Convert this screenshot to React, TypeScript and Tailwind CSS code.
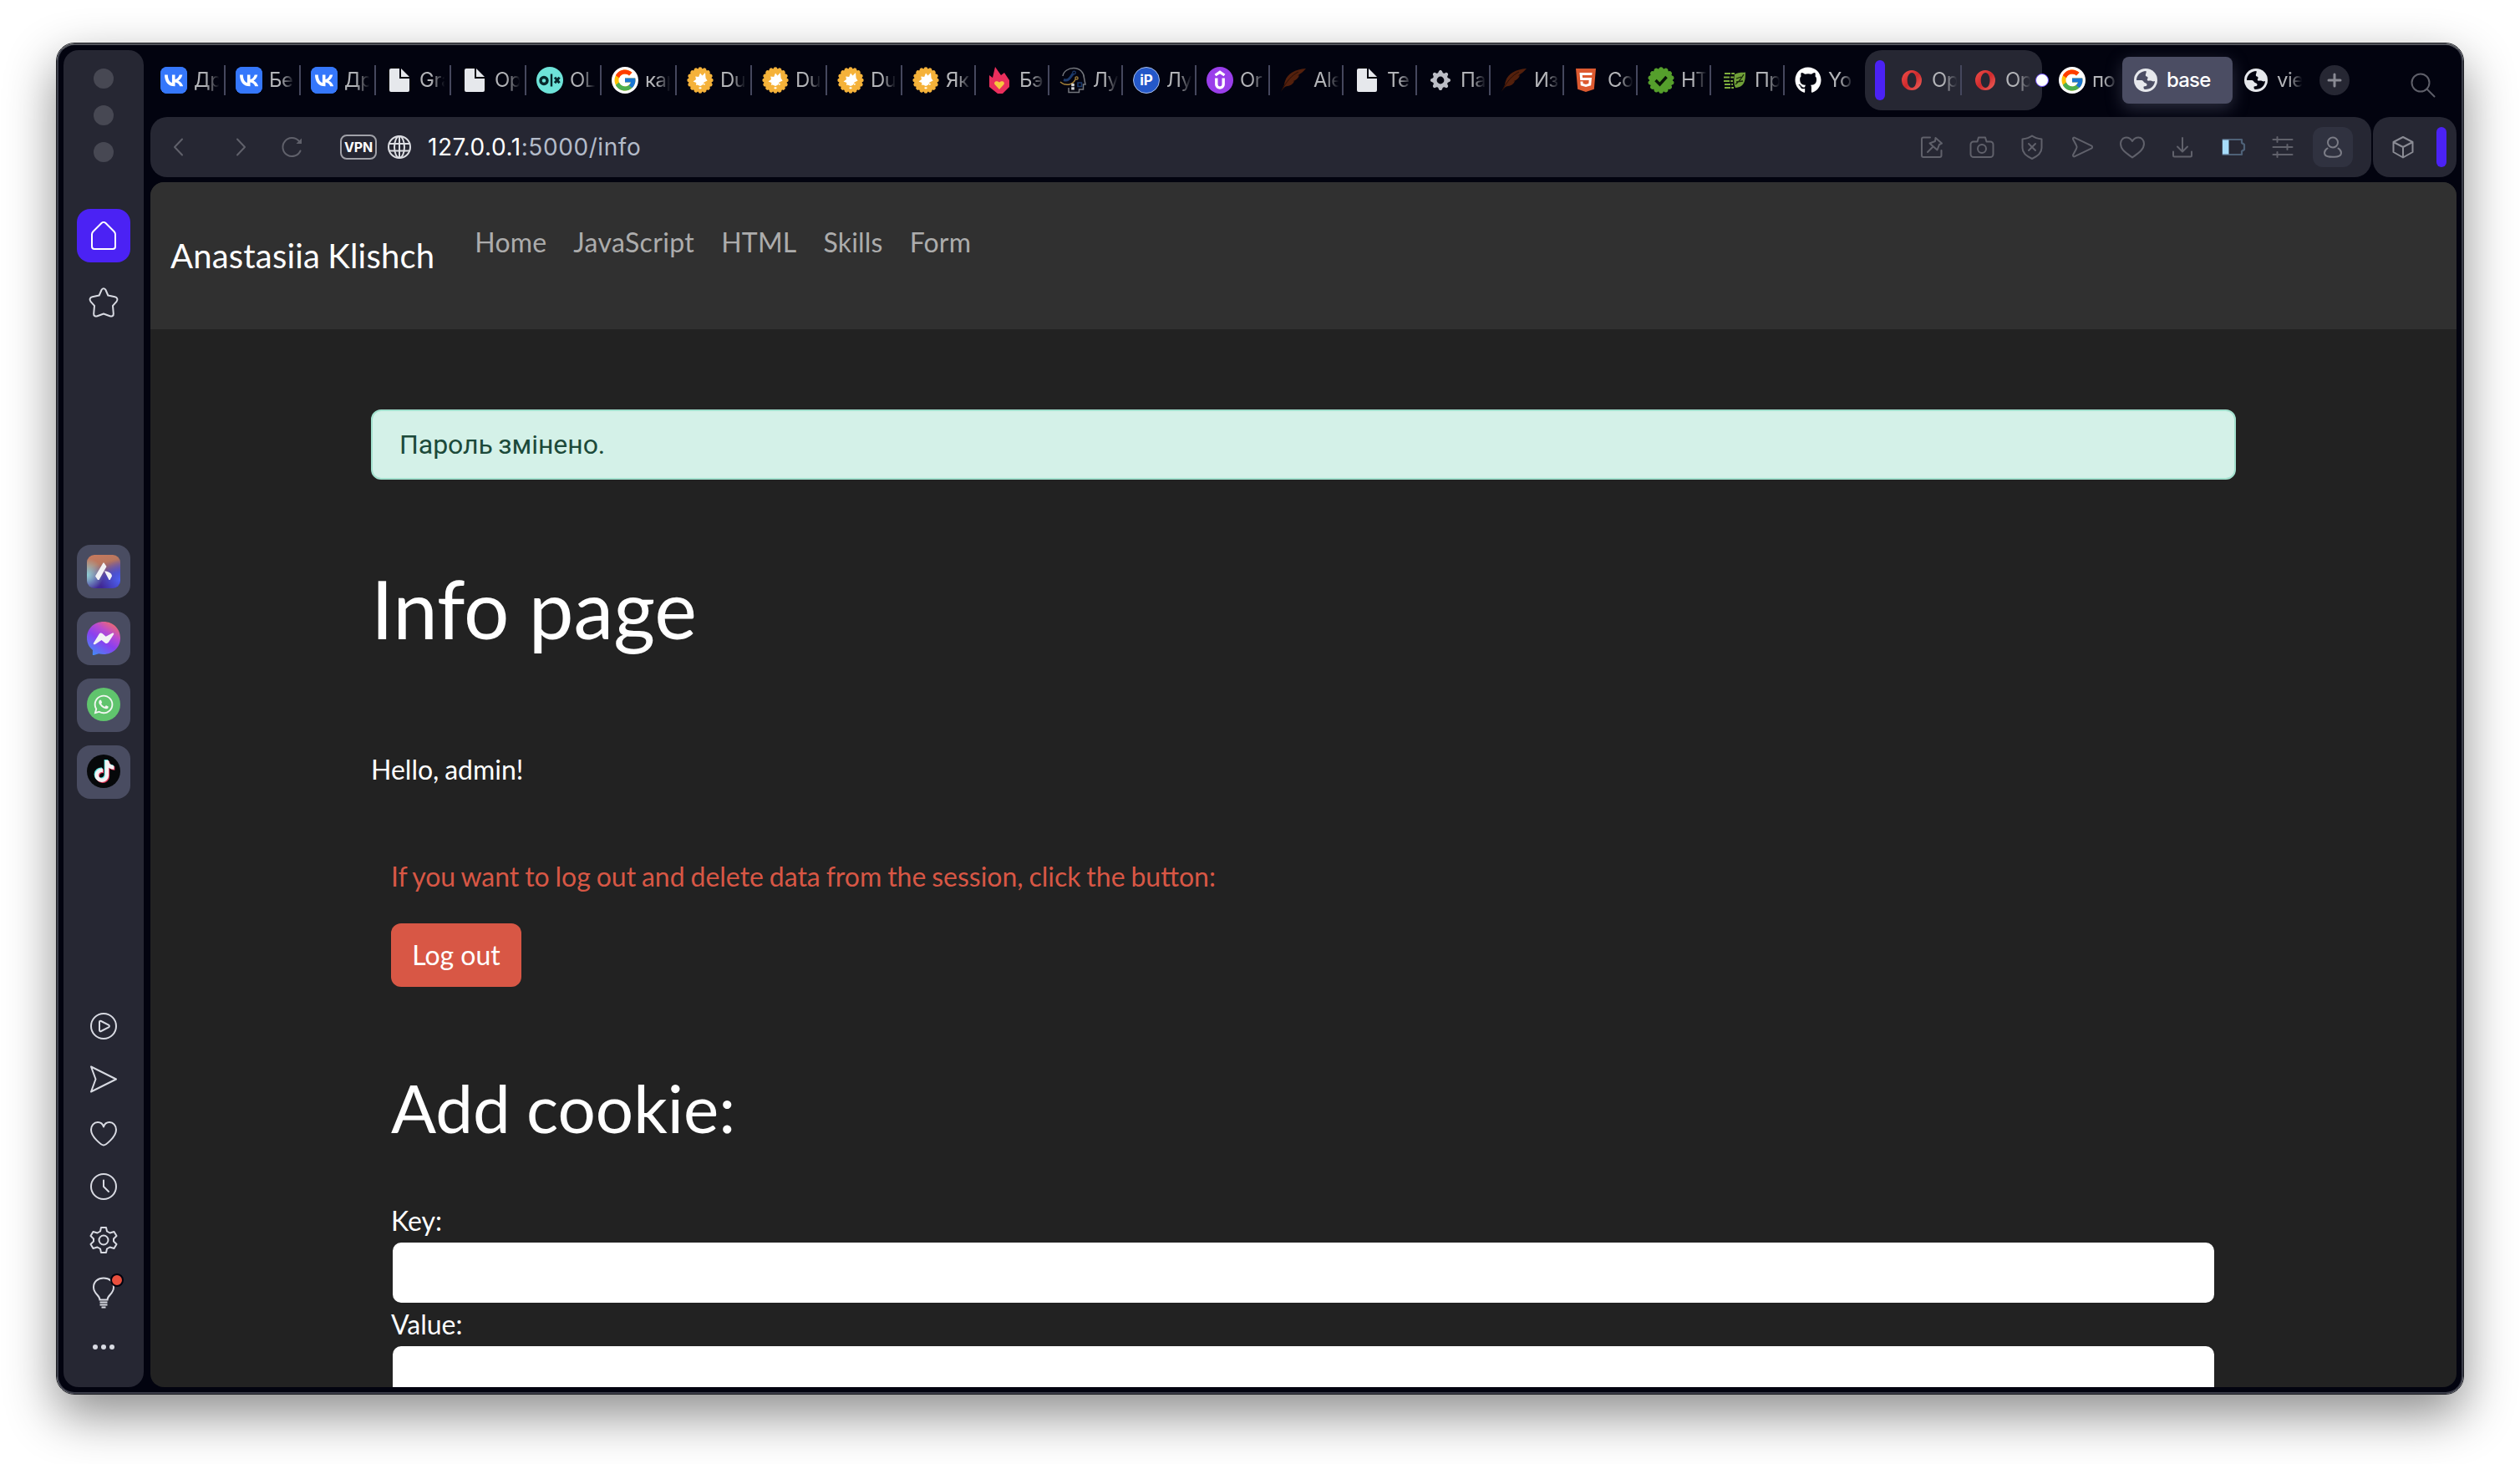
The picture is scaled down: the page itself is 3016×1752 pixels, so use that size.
import type { ReactNode } from "react";
import { FaVk, FaGithub, FaHtml5, FaWhatsapp, FaTiktok } from "react-icons/fa6";
import { FcGoogle } from "react-icons/fc";
import { BsGearFill } from "react-icons/bs";

const chromeFont = "font-['Inter','Noto_Sans',sans-serif]";

/* ---------- favicons ---------- */

const Vk = () => (
  <span className="flex size-8 items-center justify-center overflow-hidden rounded-lg bg-[#3577fb]">
    <span className="flex size-7 items-center justify-center bg-white text-[#3577fb]">
      <FaVk className="size-[38px] shrink-0" />
    </span>
  </span>
);

const Doc = () => (
  <svg viewBox="0 0 32 32" className="size-8">
    <path d="M6 2h10v12h12v14a2 2 0 0 1-2 2H6a2 2 0 0 1-2-2V4a2 2 0 0 1 2-2z" fill="#e6e8ec" />
    <path d="M18 2l10 10H18z" fill="#e6e8ec" />
  </svg>
);

const Olx = () => (
  <span className="flex size-8 items-center justify-center rounded-full bg-[#6ee3d9]">
    <svg viewBox="0 0 32 32" className="size-8" fill="none" stroke="#06262b">
      <circle cx="9" cy="16.500" r="4" strokeWidth="3.400" />
      <path d="M18 8.500v15" strokeWidth="2.400" />
      <path d="M22 12.600l5.600 6.600M27.600 12.600l-5.600 6.600" strokeWidth="3" />
    </svg>
  </span>
);

const Google = () => (
  <span className="flex size-8 items-center justify-center rounded-full bg-white">
    <FcGoogle className="size-[30px]" />
  </span>
);

const Duplicate = () => (
  <svg viewBox="0 0 32 32" className="size-8">
    <g fill="#f5b23a">
      <circle cx="16" cy="16" r="14" />
      {[0, 1, 2, 3, 4, 5, 6, 7, 8, 9, 10, 11, 12, 13, 14, 15].map((i) => (
        <circle key={i} cx="16" cy="2.600" r="2.300" transform={`rotate(${i * 22.5} 16 16)`} />
      ))}
    </g>
    <path d="M16 7.500l2.500 3 3.500-3.500.6 6.500 2 3-4 2-1.500 3-3 1.500-3.500-1.500-1.500 .5.200-3-3.800-1.500 3.500-2.500-.8-3.500 4 .6z" fill="#fff" />
    <ellipse cx="16" cy="25.300" rx="1.700" ry="1.100" fill="#fff" />
    <circle cx="20.800" cy="20.800" r="1" fill="#fff" />
  </svg>
);

const Flame = () => (
  <svg viewBox="0 0 32 32" className="size-8">
    <path d="M11 0l7 10 4-3 6 9v8l-8 8h-6L4 24V10l4 3z" fill="#ea2f5c" />
    <path d="M16 27l-5.500-6c-1.500-2.500 1.500-5.500 5.500-2.500 4-3 7 0 5.500 2.500z" fill="#f7c83e" />
  </svg>
);

const Head = () => (
  <svg viewBox="0 0 32 32" className="size-8" fill="none">
    <path d="M4 11C5 5 11 1.500 17 1.500c8 0 12.500 6 12.500 12L31 21h-2.500v6h-5v3.500H11V25" stroke="#74777d" strokeWidth="1.500" />
    <path d="M5 15.500c6 2 8-3 11-7" stroke="#1c3a6b" strokeWidth="3" />
    <circle cx="17.500" cy="7" r="1.800" stroke="#1c3a6b" strokeWidth="1.300" />
    <path d="M1 18c6 5.500 15 4 18-3" stroke="#a8843a" strokeWidth="1.500" />
    <circle cx="20.500" cy="13.500" r="1.600" stroke="#a8843a" strokeWidth="1.300" />
    <rect x="22" y="19" width="4.500" height="4.500" stroke="#1c3a6b" strokeWidth="1.500" />
    <path d="M16 20v7.500" stroke="#d3d5d8" strokeWidth="3.600" strokeDasharray="3.300 .9" />
  </svg>
);

const Ip = () => (
  <span className="flex size-8 items-center justify-center rounded-full border border-[#a9bde6] bg-[#2458c9] text-[17px] leading-none font-bold text-white">
    iP
  </span>
);

const Udemy = () => (
  <svg viewBox="0 0 32 32" className="size-8" fill="none" stroke="#fff">
    <circle cx="16" cy="16" r="16" fill="#9a3eea" stroke="none" />
    <path d="M10.500 10L16 6.300 21.500 10" strokeWidth="3.200" />
    <path d="M11.800 13.500v7.500c0 5.500 8.400 5.500 8.400 0v-7.500" strokeWidth="3.400" />
  </svg>
);

const Feather = () => (
  <svg viewBox="0 0 32 32" className="size-8">
    <path d="M31 2C18 3 9 8 6 17c-1 2.500-.8 4-.8 4L1 30c3-5 5-6.500 8-7 4-.5 7-3 8-6l-2 .3c4-1 7-4 8-7l-2 .2c4-2.500 7-5 10-8.500z" fill="#53200c" />
    <path d="M2 28C8 17 14 10 22 6" stroke="#1d0a06" strokeWidth=".8" fill="none" />
  </svg>
);

const Gear = () => (
  <span className="flex size-8 items-center justify-center text-[#bcbec6]">
    <BsGearFill className="size-6" />
  </span>
);

const Html5 = () => (
  <span className="-ml-1 flex size-8 items-center justify-center text-[#dd5a30]">
    <span className="relative flex">
      <span className="absolute inset-x-[7px] inset-y-[6px] bg-white" />
      <FaHtml5 className="relative size-8" />
    </span>
  </span>
);

const Badge = () => (
  <svg viewBox="0 0 32 32" className="size-8">
    <g fill="#559f2c">
      <circle cx="16" cy="16" r="14" />
      {[0, 1, 2, 3, 4, 5, 6, 7, 8, 9, 10, 11, 12, 13].map((i) => (
        <circle key={i} cx="16" cy="2.800" r="2.600" transform={`rotate(${i * 25.7143} 16 16)`} />
      ))}
    </g>
    <path d="M9.500 16l5 5 8-9" fill="none" stroke="#071207" strokeWidth="3.400" />
  </svg>
);

const Leaf = () => (
  <svg viewBox="0 0 32 32" className="size-8">
    <path d="M16 9c4-2.500 8-2 13-2.500C29 15 29 24 17 25c-2-4-2-11-1-16z" fill="#6f9f38" />
    <path d="M17 21c4-3 7-7 10-12M18 14l6-2M18 18l8-1" stroke="#132208" strokeWidth="1.300" fill="none" />
    <path d="M4 8h12M3 12.500h12M3 17h11M4 21h10M4 25h11" stroke="#7fae3d" strokeWidth="2.200" strokeDasharray="7 1.200" />
  </svg>
);

const GitHub = () => <FaGithub className="size-8 text-white" />;

const Opera = () => (
  <svg viewBox="0 0 24 24" className="size-6">
    <defs>
      <linearGradient id="opera" x1="0" y1="0" x2="1" y2="1">
        <stop offset="0" stopColor="#f0504a" />
        <stop offset=".5" stopColor="#cf2a2d" />
        <stop offset="1" stopColor="#f0665e" />
      </linearGradient>
    </defs>
    <path
      fillRule="evenodd"
      fill="url(#opera)"
      d="M12 0a12 12 0 1 0 0 24 12 12 0 0 0 0-24zM12.300 3c3 0 5.200 4 5.200 9s-2.200 9-5.200 9-5.600-4-5.600-9 2.600-9 5.600-9z"
    />
  </svg>
);

const Earth = ({ hole }: { hole: string }) => (
  <svg viewBox="0 0 28 28" className="size-7">
    <circle cx="14" cy="14" r="14" fill="#e6e8ec" />
    <path
      d="M3 14C3 8 8 3 14.500 3c.8 2-.7 3.200-.7 5 0 1.800 2.200 1.200 2.700 2.600.6 1.700-1.300 2.200-.6 3.400.8 1.300 3 .2 4.300.6 1.300.5 2.600 1.400 4.800.4C24.500 21 20 25 13 25c-1.500-.6-1.500-2-1.500-3.300 1.300 0 4.500-.4 4-2.600-.3-1.600-2-1.500-3-2.300C11.600 15.800 10.500 14 9 14z"
      fill={hole}
    />
  </svg>
);

/* ---------- tab strip ---------- */

function TabLabel({ children }: { children: ReactNode }) {
  return (
    <span className="block w-[31px] overflow-hidden text-[24px] leading-8 tracking-[-0.5px] whitespace-nowrap text-[#b4b5b9] [mask-image:linear-gradient(to_right,black_45%,transparent_98%)]">
      {children}
    </span>
  );
}

function Tab({ icon, label, wide }: { icon: ReactNode; label: string; wide?: boolean }) {
  return (
    <div className={wide ? "flex w-[90px] shrink-0 items-center" : "flex w-[88px] shrink-0 items-center"}>
      <div className="flex flex-1 items-center gap-2 pl-3">
        <span className="flex size-8 shrink-0 items-center justify-center">{icon}</span>
        <TabLabel>{label}</TabLabel>
      </div>
      <span className="h-9 w-0.5 bg-[#45475d]" />
    </div>
  );
}

const wideTabs: [ReactNode, string][] = [
  [<Vk />, "Др"],
  [<Vk />, "Бе"],
  [<Vk />, "Др"],
  [<Doc />, "Gra"],
  [<Doc />, "Op"],
  [<Olx />, "OL"],
  [<Google />, "кар"],
  [<Duplicate />, "Du"],
  [<Duplicate />, "Du"],
  [<Duplicate />, "Du"],
];

const tabs: [ReactNode, string][] = [
  [<Duplicate />, "Як"],
  [<Flame />, "Бэ"],
  [<Head />, "Лу"],
  [<Ip />, "Лу"],
  [<Udemy />, "Or"],
  [<Feather />, "Ale"],
  [<Doc />, "Те"],
  [<Gear />, "Па"],
  [<Feather />, "Из"],
  [<Html5 />, "Со"],
  [<Badge />, "HT"],
  [<Leaf />, "Пр"],
];

function TabStrip() {
  return (
    <div className={`flex h-[86px] items-center pb-0.5 ${chromeFont}`}>
      {wideTabs.map(([icon, label], i) => (
        <Tab key={i} icon={icon} label={label} wide />
      ))}
      {tabs.map(([icon, label], i) => (
        <Tab key={i} icon={icon} label={label} />
      ))}
      <div className="flex w-24 shrink-0 items-center gap-2 pl-3">
        <GitHub />
        <TabLabel>Yo</TabLabel>
      </div>

      <div className="relative flex h-[72px] w-[212px] shrink-0 items-center rounded-[20px] bg-[#262733] pl-3">
        <span className="h-12 w-3 rounded-md bg-[#4b22f4]" />
        <span className="ml-5"><Opera /></span>
        <span className="ml-3 w-[33px]"><TabLabel>Op</TabLabel></span>
        <span className="mr-4 ml-px h-9 w-0.5 bg-[#45475d]" />
        <Opera />
        <span className="ml-3"><TabLabel>Op</TabLabel></span>
        <span className="absolute top-[28px] -right-2 size-4 rounded-full border border-[#6a4bf6] bg-white" />
      </div>

      <div className="ml-5 flex w-[76px] shrink-0 items-center gap-2">
        <Google />
        <TabLabel>по</TabLabel>
      </div>
      <div className="flex h-14 w-[132px] shrink-0 items-center gap-[11px] rounded-lg bg-[#4b4d63] pl-[14px] text-[24px] font-medium tracking-[-0.8px] text-white shadow-[0_6px_20px_rgba(120,122,150,0.35)]">
        <Earth hole="#4b4d63" />
        base
      </div>
      <div className="ml-[14px] flex w-[90px] shrink-0 items-center gap-[11px]">
        <Earth hole="#02030f" />
        <TabLabel>vie</TabLabel>
      </div>
      <svg viewBox="0 0 36 36" className="size-9 shrink-0">
        <circle cx="18" cy="18" r="18" fill="#262733" />
        <path d="M18 11v14M11 18h14" stroke="#898a93" strokeWidth="3" strokeLinecap="round" />
      </svg>
      <svg viewBox="0 0 30 30" className="mt-3 ml-[73px] size-[30px] shrink-0" fill="none" stroke="#5e5f69" strokeWidth="2" strokeLinecap="round">
        <circle cx="12" cy="12" r="10.500" />
        <path d="M19.500 19.500l9 9" />
      </svg>
    </div>
  );
}

/* ---------- address bar ---------- */

function Line({ className, children }: { className: string; children: ReactNode }) {
  return (
    <svg viewBox="0 0 32 32" className={className} fill="none" stroke="currentColor" strokeWidth="2" strokeLinecap="round" strokeLinejoin="round">
      {children}
    </svg>
  );
}

function AddressBar() {
  return (
    <div className={`flex h-[72px] gap-0.5 ${chromeFont}`}>
      <div className="flex w-[2658px] items-center rounded-[20px] bg-[#262733] text-[#60616b]">
        <Line className="ml-[18px] size-8"><path d="M20 6.500l-9 9.500 9 9.500" /></Line>
        <Line className="ml-[41px] size-8"><path d="M13 6.500l9 9.500-9 9.500" /></Line>
        <Line className="ml-[31px] size-8">
          <path d="M25.500 20.500A11 11 0 1 1 23.500 8.500l2.500 2.500" />
          <path d="M27 5.500V12h-6.500z" fill="currentColor" stroke="none" />
        </Line>
        <span className="ml-[41px] flex h-[30px] w-11 items-center justify-center rounded-lg border-2 border-[#a0a1a8] text-[16px] font-bold tracking-[-0.2px] text-white">
          VPN
        </span>
        <svg viewBox="0 0 28 28" className="ml-[13px] size-7" fill="none" stroke="#dcdde2" strokeWidth="2">
          <circle cx="14" cy="14" r="13" />
          <ellipse cx="14" cy="14" rx="6" ry="13" />
          <path d="M14 1v26M1.500 10h25M1.500 18.500h25" />
        </svg>
        <span className="ml-5 flex-1 text-[28px] tracking-[0.58px] text-[#b3bbc9]">
          <span className="text-white">127.0.0.1</span>:5000/info
        </span>
        <div className="flex items-center gap-7">
          <Line className="size-8">
            <path d="M14 4.500H6a2 2 0 0 0-2 2V26a2 2 0 0 0 2 2h19.500a2 2 0 0 0 2-2v-6" />
            <path d="M20.500 5l7.500 6.500-3 1.500-2.500 6.500-9-8 6.500-2.500zM17 16l-6 6" />
          </Line>
          <Line className="size-8">
            <path d="M6 9.500h4.500l1.500-5h8l1.500 5H26a3.500 3.500 0 0 1 3.500 3.500v11.500A3.500 3.500 0 0 1 26 28H6a3.500 3.500 0 0 1-3.500-3.500V13A3.500 3.500 0 0 1 6 9.500z" />
            <circle cx="16" cy="18" r="5" />
          </Line>
          <Line className="size-8">
            <path d="M16 2.500c4 3 7 3.500 11.500 4V17c0 6.500-5 10-11.500 13C9.500 27 4.500 23.500 4.500 17V6.500C9 6 12 5.500 16 2.500z" />
            <path d="M12 12l8 8M20 12l-8 8" />
          </Line>
          <Line className="size-8">
            <path d="M5 6.500c-.3-1.500 1-2.300 2.200-1.700L27 14.300c1.500.8 1.500 2.600 0 3.400L7.200 27.200C6 27.800 4.700 27 5 25.500l4-7.500c.8-1.300.8-2.700 0-4z" />
          </Line>
          <Line className="size-8">
            <path d="M16 28.500C10 24 2 19.500 2 12c0-4.500 3-7.500 6.700-7.500 3.300 0 5.800 2 7.300 4.500 1.500-2.500 4-4.500 7.300-4.500C27 4.500 30 7.500 30 12c0 7.500-8 12-14 16.500z" />
          </Line>
          <Line className="size-8">
            <path d="M16 5v16M10 15.500l6 6 6-6M5 21.500V26a1.500 1.500 0 0 0 1.500 1.500h19A1.500 1.500 0 0 0 27 26v-4.500" />
          </Line>
        </div>
        <svg viewBox="0 0 32 32" className="ml-7 size-8" fill="none">
          <path d="M4.500 7H27v4l3 2v6l-3 2v4H4.500z" stroke="#4e6177" strokeWidth="2.200" strokeLinejoin="round" />
          <rect x="4" y="7.500" width="7.500" height="17" fill="#a6dcfb" />
        </svg>
        <Line className="ml-7 size-8">
          <path d="M4.500 7h23M4.500 16h23M4.500 25h23M9.500 4v6M21.500 13v6M9.500 22v6" />
        </Line>
        <span className="mr-[22px] ml-5 flex size-12 items-center justify-center rounded-xl bg-[#303240] text-[#7b7c86]">
          <Line className="size-8">
            <circle cx="16" cy="10.500" r="6" />
            <path d="M9.500 17.500c-3 2-4 5-3 7.500 1 2 3 2.800 9.500 2.800s8.500-.8 9.500-2.800c1-2.500 0-5.500-3-7.500" />
          </Line>
        </span>
      </div>
      <div className="flex w-[100px] items-center rounded-[20px] bg-[#262733] text-[#8b8c95]">
        <Line className="ml-5 size-8">
          <path d="M16 4l11.500 6v12L16 28.500 4.500 22V10zM4.500 10L16 16l11.500-6M16 16v12.500" />
        </Line>
        <span className="ml-6 h-12 w-3 rounded-md bg-[#4b22f4]" />
      </div>
    </div>
  );
}

/* ---------- sidebar ---------- */

const AppTile = ({ children }: { children: ReactNode }) => (
  <span className="flex size-16 items-center justify-center rounded-2xl bg-[#494c61]">{children}</span>
);

function Sidebar() {
  return (
    <div className="flex w-24 flex-col items-center rounded-[18px] bg-[#262733] text-[#d8dae2]">
      <div className="mt-[22px] flex flex-col gap-5">
        <span className="size-6 rounded-full bg-[#474853]" />
        <span className="size-6 rounded-full bg-[#474853]" />
        <span className="size-6 rounded-full bg-[#474853]" />
      </div>
      <span className="mt-14 flex size-16 items-center justify-center rounded-2xl bg-[#4b22f4] text-white">
        <svg viewBox="0 0 36 36" className="size-9" fill="none" stroke="currentColor" strokeWidth="2" strokeLinejoin="round">
          <path d="M4 16.500c0-1.500.5-2.500 1.500-3.500L15.500 3c1.500-1.500 3.500-1.500 5 0l10 10c1 1 1.500 2 1.500 3.500V31a3 3 0 0 1-3 3H7a3 3 0 0 1-3-3z" />
        </svg>
      </span>
      <svg viewBox="0 0 40 40" className="mt-7 size-10" fill="none" stroke="currentColor" strokeWidth="2" strokeLinejoin="round">
        <path d="M17.500 5c1-2.500 4-2.500 5 0l2.800 6.500 8.200 1.700c3 .7 3.800 3.600 2 5.600l-4.500 5 .8 9.700c.2 2.500-2 3.700-4.300 2.800L20 33.500l-7.500 2.800c-2.300.9-4.500-.3-4.300-2.800l.8-9.700-4.500-5c-1.800-2-1-4.900 2-5.600l8.200-1.700z" />
      </svg>

      <div className="mt-[270px] flex flex-col gap-4">
        <AppTile>
          <svg viewBox="0 0 40 40" className="size-10">
            <defs>
              <linearGradient id="aria" x1="0" y1="0" x2=".3" y2="1">
                <stop offset="0" stopColor="#c97a5d" />
                <stop offset=".35" stopColor="#b9775f" />
                <stop offset=".75" stopColor="#4c3a9c" />
                <stop offset="1" stopColor="#3f2795" />
              </linearGradient>
              <radialGradient id="ariaCyan" cx="0" cy=".6" r=".5">
                <stop offset="0" stopColor="#8fd0d8" />
                <stop offset="1" stopColor="#8fd0d8" stopOpacity="0" />
              </radialGradient>
              <radialGradient id="ariaBlue" cx="1" cy=".75" r=".6">
                <stop offset="0" stopColor="#4d62f2" />
                <stop offset="1" stopColor="#4d62f2" stopOpacity="0" />
              </radialGradient>
            </defs>
            <rect width="40" height="40" rx="9" fill="url(#aria)" />
            <rect width="40" height="40" rx="9" fill="url(#ariaCyan)" />
            <rect width="40" height="40" rx="9" fill="url(#ariaBlue)" />
            <path d="M19.500 9.500h1l3 4.500-9 16h-1.500l-3-4.500zM21 19.500c4.500 0 9 2.500 9 6l-2.500 4.500H26.500z" fill="#f2f2f5" />
          </svg>
        </AppTile>
        <AppTile>
          <svg viewBox="0 0 40 40" className="size-10">
            <defs>
              <linearGradient id="msg" x1=".15" y1="1" x2=".8" y2="0">
                <stop offset="0" stopColor="#3f8ef5" />
                <stop offset=".45" stopColor="#8a3ff0" />
                <stop offset=".7" stopColor="#b94bd0" />
                <stop offset="1" stopColor="#f56f62" />
              </linearGradient>
            </defs>
            <path d="M20 0c11.300 0 20 8.300 20 19.500S31.300 39 20 39c-2 0-4-.3-5.800-.8L8.500 40c-1 .4-1.800-.2-1.700-1.200L7 34C2.500 30.500 0 25.500 0 19.500 0 8.300 8.700 0 20 0z" fill="url(#msg)" />
            <path d="M8 25.500L14.500 15c1-1.500 2.800-1.800 4.200-.8l4 3.500 7.500-4c1.500-.7 2.500.3 1.800 1.600l-6 9.300c-1 1.500-2.800 1.800-4.200.8l-4.300-3.500-7.500 5c-1.500.8-2.700 0-2-1.400z" fill="#f2f2f5" />
          </svg>
        </AppTile>
        <AppTile>
          <span className="mb-0.5 flex size-10 items-center justify-center rounded-full bg-[#60c46d] text-[#f2f6f2]">
            <FaWhatsapp className="size-[26px]" />
          </span>
        </AppTile>
        <AppTile>
          <span className="relative mb-0.5 flex size-10 items-center justify-center rounded-full bg-[#06080a]">
            <FaTiktok className="absolute top-[6px] left-[7px] size-[26px] text-[#5fe3e0]" />
            <FaTiktok className="absolute top-[8px] left-[9px] size-[26px] text-[#e8395c]" />
            <FaTiktok className="absolute top-[7px] left-[8px] size-[26px] text-[#f4f2f4]" />
          </span>
        </AppTile>
      </div>

      <div className="mt-auto mb-7 flex flex-col gap-6 [&>svg]:size-10">
        <svg viewBox="0 0 40 40" fill="none" stroke="currentColor" strokeWidth="2" strokeLinejoin="round">
          <circle cx="20" cy="20" r="15" />
          <path d="M15 15.200c0-1.200 1-1.700 2-1.200l9 4.700c1.200.7 1.200 1.900 0 2.600L17 26c-1 .5-2 0-2-1.200z" />
        </svg>
        <svg viewBox="0 0 40 40" fill="none" stroke="currentColor" strokeWidth="2" strokeLinejoin="round">
          <path d="M5 4.500L35 19.500 5 34.500l5.500-15z" />
        </svg>
        <svg viewBox="0 0 40 40" fill="none" stroke="currentColor" strokeWidth="2" strokeLinejoin="round">
          <path d="M20 34.500c-2 0-15-9.500-15-18.500 0-5 3.500-9 8-9 3.500 0 6 2 7 5.500C21 9 23.500 7 27 7c4.500 0 8 4 8 9 0 9-13 18.500-15 18.500z" />
        </svg>
        <svg viewBox="0 0 40 40" fill="none" stroke="currentColor" strokeWidth="2" strokeLinecap="round" strokeLinejoin="round">
          <circle cx="20" cy="20" r="15" />
          <path d="M20 12.500V20l6 6" />
        </svg>
        <svg viewBox="0 0 40 40" fill="none" stroke="currentColor" strokeWidth="2" strokeLinejoin="round">
          <path d="M17 5h6l1 4.500 3.500 2 5-1.500 3 5-3.500 3.500v3l3.500 3.500-3 5-5-1.500-3.500 2L23 35h-6l-1-4.500-3.500-2-5 1.500-3-5L8 21.500v-3L4.500 15l3-5 5 1.500 3.500-2z" />
          <circle cx="20" cy="20" r="5.500" />
        </svg>
        <svg viewBox="0 0 40 40" className="overflow-visible" fill="none" stroke="currentColor" strokeWidth="2">
          <path d="M15.500 27.500c0-5.500-7.500-7-7.500-15C8 6 13 1.500 20 1.500S32 6 32 12.500c0 8-7.500 9.500-7.500 15zM15.500 30.500h9M15.500 33.500h9M17.500 36.500h5" />
          <circle cx="36" cy="4" r="7" fill="#e94f3d" stroke="#02030f" />
        </svg>
        <svg viewBox="0 0 40 40" fill="currentColor">
          <circle cx="10" cy="20" r="3" />
          <circle cx="20" cy="20" r="3" />
          <circle cx="30" cy="20" r="3" />
        </svg>
      </div>
    </div>
  );
}

/* ---------- web page ---------- */

function Page() {
  return (
    <div className="mt-1.5 flex h-[1442px] flex-col overflow-hidden rounded-2xl bg-[#222222] font-['Lato',sans-serif] text-[32px] leading-[48px] text-white [word-spacing:-0.042em]">
      <nav className="flex h-44 shrink-0 items-start bg-[#303030] pl-6 tracking-[0.2px]">
        <span className="mt-[58px] text-[40px] leading-[60px]">Anastasiia Klishch</span>
        <div className="mt-12 ml-12 flex gap-8 text-[#acacac]">
          <a>Home</a>
          <a className="tracking-[0.35px]">JavaScript</a>
          <a>HTML</a>
          <a>Skills</a>
          <a>Form</a>
        </div>
      </nav>
      <main className="mx-[264px] mt-24 flex shrink-0 flex-col">
        <div className="flex h-[84px] items-center rounded-xl border-2 border-[#a3e1ce] bg-[#d4f1e8] px-8 font-['Roboto',sans-serif] tracking-[-0.05px] text-[#1c4a3a]">
          Пароль змінено.
        </div>
        <h1 className="mt-24 text-[96px] leading-[115px]">Info page</h1>
        <p className="mt-28">Hello, admin!</p>
        <section className="mt-20 flex flex-col px-6">
          <p className="text-[#d85745]">If you want to log out and delete data from the session, click the button:</p>
          <button className="mt-8 h-[76px] w-[156px] rounded-xl bg-[#d85745]">Log out</button>
          <h2 className="mt-24 text-[80px] leading-24">Add cookie:</h2>
          <label className="mt-16">Key:</label>
          <input className="h-[76px] rounded-xl border-2 border-[#222222] bg-white" />
          <label>Value:</label>
          <input className="h-[76px] rounded-xl border-2 border-[#222222] bg-white" />
        </section>
      </main>
    </div>
  );
}

export default function App() {
  return (
    <div className="h-[1752px] w-[3016px] overflow-hidden bg-white pt-[51px] pl-[67px]">
      <div className="h-[1618px] w-[2882px] rounded-[22px] border border-[#1c1d22] shadow-[0_24px_60px_rgba(0,0,0,0.45)]">
        <div className="flex h-full gap-2 rounded-[21px] border-2 border-[#3a3c48] border-t-[#53555c] bg-[#02030f] px-1.5 pt-1.5 pb-1.5">
          <Sidebar />
          <div className="-mt-1.5 flex w-[2760px] flex-col">
            <TabStrip />
            <AddressBar />
            <Page />
          </div>
        </div>
      </div>
    </div>
  );
}
